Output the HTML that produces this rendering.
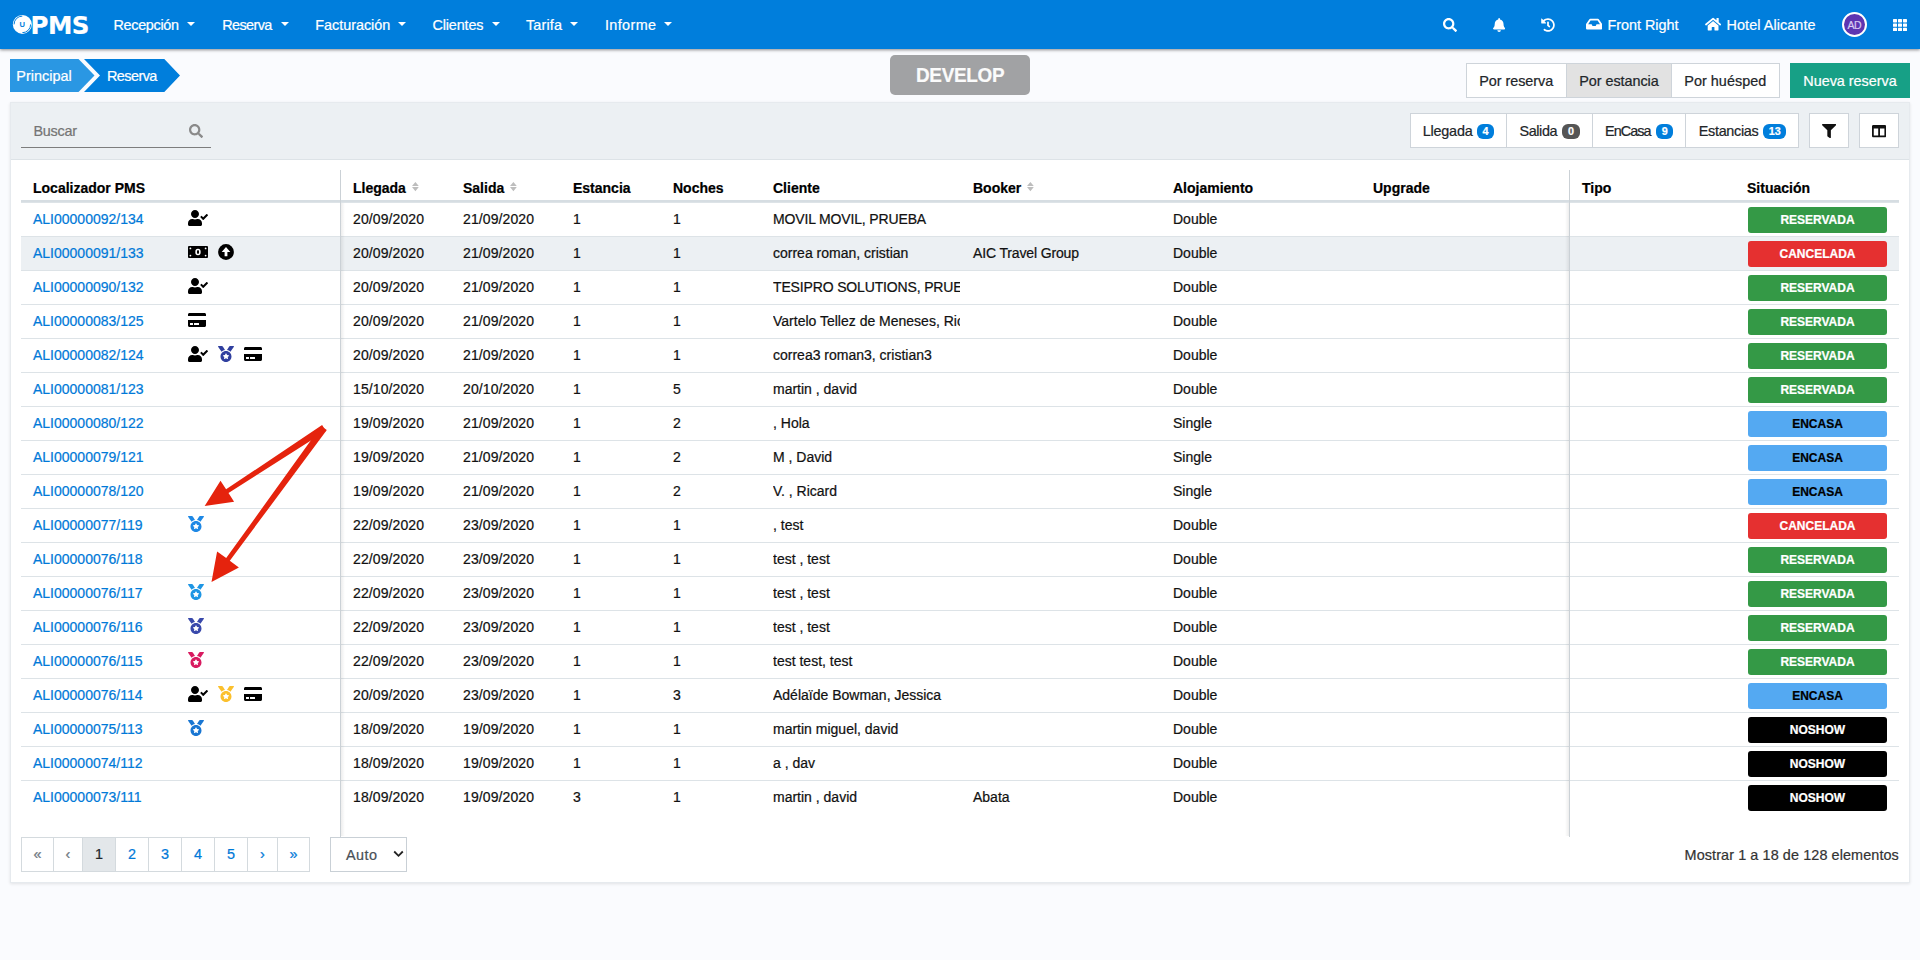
<!DOCTYPE html><html lang="es"><head><meta charset="utf-8"><title>PMS - Reserva</title><style>
*{box-sizing:border-box}
html,body{margin:0;padding:0}
body{width:1920px;height:960px;overflow:hidden;background:#fafbfe;font-family:"Liberation Sans",sans-serif;position:relative}
.t{position:absolute;white-space:nowrap;display:block}
.abs{position:absolute}
svg.ic{display:block}
body{-webkit-text-stroke:0.22px}
#nav{position:absolute;left:0;top:0;width:1920px;height:49px;background:#007edc;box-shadow:0 1px 3px rgba(0,0,0,.45)}
.caret{position:absolute;top:22px;width:0;height:0;border-left:4px solid transparent;border-right:4px solid transparent;border-top:4.3px solid #fff}
#panel{position:absolute;left:10px;top:102px;width:1900px;height:781px;background:#fff;border:1px solid #e6eaee;box-shadow:0 1px 3px rgba(0,0,0,.10)}
#toolbar{position:absolute;left:0;top:0;width:1898px;height:57px;background:#ecf0f3;border-bottom:1px solid #dde3e7}
.btn{position:absolute;background:#fff;border:1px solid #ced4da}
table{position:absolute;left:21px;top:170px;width:1878px;border-collapse:separate;border-spacing:0;table-layout:fixed;font-size:14px;color:#111}
th{height:32px;padding:6px 12px 0 12px;text-align:left;font-weight:700;border-bottom:2px solid #d6dde2;line-height:16px;vertical-align:top;white-space:nowrap;color:#000;padding-top:10px}
td{height:34px;padding:0 0 1px 12px;border-top:1px solid #dde3e7;line-height:16px;vertical-align:middle;white-space:nowrap;overflow:hidden}
tr.h td{background:#ecf0f3}
td a{color:#0079d8;text-decoration:none}
td.loc{position:relative}
td.loc .icons{position:absolute;left:167px;top:0;height:33px;display:flex;align-items:center}
td.loc .icons svg{margin-right:10px;position:relative;top:-1.5px}
.st{display:block;margin-left:1px;width:139px;height:26px;border-radius:3px;font-size:12px;font-weight:700;line-height:26px;text-align:center;color:#fff;margin-top:1px}
.st.res{background:#349946}.st.can{background:#e53030}.st.enc{background:#54a9f2;color:#000}.st.nos{background:#000}
.d{letter-spacing:.1px}
.cl{width:187px;overflow:hidden;white-space:nowrap}
td.tp,th.tp{padding-left:13px}
.sort{display:inline-block;vertical-align:top;margin-left:6px;margin-top:0px}
.pg{position:absolute;top:837px;height:35px;border:1px solid #d4dade;background:#fff;font-size:14.4px;line-height:33.5px;text-align:center}
.badge{position:absolute;height:14.5px;border-radius:6px;color:#fff;font-size:10.8px;font-weight:700;line-height:14.5px;text-align:center}
</style></head><body>
<div id="nav">
<svg class="abs" style="left:10px;top:12px" width="25" height="25" viewBox="10 12 25 25"><circle cx="22.350" cy="24.400" r="9.500" fill="#fff"/><path d="M14.050 24.400A8.300 8.300 0 0 1 22.350 16.100M30.650 24.400A8.300 8.300 0 0 1 22.350 32.700" fill="none" stroke="#007edc" stroke-width="1"/><text x="22.300" y="27.100" font-size="7.600" font-weight="700" text-anchor="middle" fill="#007edc" font-family="Liberation Sans, sans-serif">U</text></svg>
<span id="pms" class="t" style="left:30.5px;top:6.8px;font-size:24.5px;line-height:38px;font-weight:700;color:#fff;letter-spacing:-.5px;font-family:'DejaVu Sans','Liberation Sans',sans-serif">PMS</span>
<span id="t1" class="t" style="left:113.5px;top:14.01px;font-size:14.4px;line-height:22px;color:#fff;font-weight:400;letter-spacing:-0.312px;">Recepción</span>
<i class="caret" style="left:186.8px"></i>
<span id="t2" class="t" style="left:222.25px;top:14.01px;font-size:14.4px;line-height:22px;color:#fff;font-weight:400;letter-spacing:-0.599px;">Reserva</span>
<i class="caret" style="left:281px"></i>
<span id="t3" class="t" style="left:315.25px;top:14.01px;font-size:14.4px;line-height:22px;color:#fff;font-weight:400;letter-spacing:-0.019px;">Facturación</span>
<i class="caret" style="left:398px"></i>
<span id="t4" class="t" style="left:432.5px;top:14.01px;font-size:14.4px;line-height:22px;color:#fff;font-weight:400;letter-spacing:-0.143px;">Clientes</span>
<i class="caret" style="left:492px"></i>
<span id="t5" class="t" style="left:526px;top:14.01px;font-size:14.4px;line-height:22px;color:#fff;font-weight:400;letter-spacing:0.159px;">Tarifa</span>
<i class="caret" style="left:570.3px"></i>
<span id="t6" class="t" style="left:605px;top:14.01px;font-size:14.4px;line-height:22px;color:#fff;font-weight:400;letter-spacing:0.367px;">Informe</span>
<i class="caret" style="left:664px"></i>
<svg class="ic" viewBox="0 0 512 512" width="14.0" height="14" style="position:absolute;left:1442.5px;top:18px"><path fill="#fff" d="M505 442.700L405.300 343c-4.500-4.500-10.600-7-17-7H372c27.600-35.300 44-79.700 44-128C416 93.100 322.900 0 208 0S0 93.100 0 208s93.100 208 208 208c48.300 0 92.700-16.400 128-44v16.300c0 6.400 2.500 12.500 7 17l99.700 99.700c9.400 9.400 24.600 9.400 33.900 0l28.300-28.300c9.400-9.400 9.400-24.600.1-34zM208 336c-70.700 0-128-57.200-128-128 0-70.700 57.200-128 128-128 70.700 0 128 57.200 128 128 0 70.700-57.200 128-128 128z"/></svg>
<svg class="ic" viewBox="0 0 448 512" width="12.25" height="14" style="position:absolute;left:1492.8px;top:18px"><path fill="#fff" d="M224 512c35.320 0 63.970-28.650 63.970-64H160.030c0 35.350 28.650 64 63.970 64zm215.390-149.710c-19.320-20.760-55.470-51.990-55.470-154.290 0-77.700-54.480-139.900-127.940-155.160V32c0-17.670-14.320-32-31.980-32s-31.980 14.330-31.980 32v20.840C118.560 68.100 64.080 130.300 64.080 208c0 102.300-36.150 133.530-55.470 154.290-6 6.450-8.660 14.160-8.610 21.710.11 16.400 12.980 32 32.100 32h383.800c19.120 0 32-15.600 32.100-32 .05-7.550-2.610-15.270-8.610-21.710z"/></svg>
<svg class="ic" viewBox="0 0 512 512" width="14.0" height="14" style="position:absolute;left:1541px;top:17.8px"><path fill="#fff" d="M504 255.531c.253 136.640-111.180 248.372-247.820 248.468-59.015.042-113.223-20.530-155.822-54.911-11.077-8.940-11.905-25.541-1.839-35.607l11.267-11.267c8.609-8.609 22.353-9.551 31.891-1.984C173.062 425.135 212.781 440 256 440c101.705 0 184-82.311 184-184 0-101.705-82.311-184-184-184-48.814 0-93.149 18.969-126.068 49.932l50.754 50.754c10.080 10.080 2.941 27.314-11.313 27.314H24c-8.837 0-16-7.163-16-16V38.627c0-14.254 17.234-21.393 27.314-11.314l49.372 49.372C129.209 34.136 189.552 8 256 8c136.810 0 247.747 110.780 248 247.531zm-180.912 78.784l9.823-12.630c8.138-10.463 6.253-25.542-4.210-33.679L288 256.349V152c0-13.255-10.745-24-24-24h-16c-13.255 0-24 10.745-24 24v135.651l65.409 50.874c10.463 8.137 25.541 6.253 33.679-4.210z"/></svg>
<svg class="ic" viewBox="0 0 576 512" width="16.2" height="14.4" style="position:absolute;left:1585.6px;top:17px"><path fill="#fff" d="M567.938 243.908L462.250 85.374A48.003 48.003 0 0 0 422.311 64H153.689a48 48 0 0 0-39.938 21.374L8.062 243.908A47.994 47.994 0 0 0 0 270.533V400c0 26.510 21.490 48 48 48h480c26.510 0 48-21.490 48-48V270.533a47.994 47.994 0 0 0-8.062-26.625zM162.252 128h251.497l85.333 128H376l-32 64H232l-32-64H76.918l85.334-128z"/></svg>
<span id="t7" class="t" style="left:1607.5px;top:14.01px;font-size:14.4px;line-height:22px;color:#fff;font-weight:400;letter-spacing:-0.019px;">Front Right</span>
<svg class="ic" viewBox="0 0 576 512" width="16.2" height="14.4" style="position:absolute;left:1704.5px;top:16.5px"><path fill="#fff" d="M280.370 148.260L96 300.110V464a16 16 0 0 0 16 16l112.060-.29a16 16 0 0 0 15.920-16V368a16 16 0 0 1 16-16h64a16 16 0 0 1 16 16v95.640a16 16 0 0 0 16 16.050L464 480a16 16 0 0 0 16-16V300L295.670 148.260a12.190 12.190 0 0 0-15.300 0zM571.600 251.470L488 182.560V44.050a12 12 0 0 0-12-12h-56a12 12 0 0 0-12 12v72.610L318.470 43a48 48 0 0 0-61 0L4.340 251.470a12 12 0 0 0-1.600 16.900l25.500 31A12 12 0 0 0 45.150 301l235.220-193.740a12.190 12.190 0 0 1 15.300 0L530.900 301a12 12 0 0 0 16.900-1.600l25.500-31a12 12 0 0 0-1.700-16.930z"/></svg>
<span id="t8" class="t" style="left:1726.5px;top:14.01px;font-size:14.4px;line-height:22px;color:#fff;font-weight:400;letter-spacing:0.077px;">Hotel Alicante</span>
<div class="abs" style="left:1842px;top:12px;width:25px;height:25px;border-radius:50%;background:#5e35b1;border:2px solid #fff"></div>
<span id="t9" class="t" style="left:1847.5px;top:16.76px;font-size:10.5px;line-height:16px;color:#d9ccf2;font-weight:400;letter-spacing:-0.594px;">AD</span>
<svg class="abs" style="left:1893px;top:18.6px" width="14" height="12.2" viewBox="0 0 14 12.2"><rect x="0" y="0.0" width="4" height="3.4" rx=".6" fill="#fff"/><rect x="5" y="0.0" width="4" height="3.4" rx=".6" fill="#fff"/><rect x="10" y="0.0" width="4" height="3.4" rx=".6" fill="#fff"/><rect x="0" y="4.4" width="4" height="3.4" rx=".6" fill="#fff"/><rect x="5" y="4.4" width="4" height="3.4" rx=".6" fill="#fff"/><rect x="10" y="4.4" width="4" height="3.4" rx=".6" fill="#fff"/><rect x="0" y="8.8" width="4" height="3.4" rx=".6" fill="#fff"/><rect x="5" y="8.8" width="4" height="3.4" rx=".6" fill="#fff"/><rect x="10" y="8.8" width="4" height="3.4" rx=".6" fill="#fff"/></svg>
</div>
<svg class="abs" style="left:10px;top:59px" width="172" height="33" viewBox="0 0 172 33"><path d="M0 0H68.500L84.500 16.500L68.500 33H0z" fill="#2a97e3"/><path d="M74 0H154.300L170 16.500L154.300 33H74L90 16.500z" fill="#007edc"/></svg>
<span id="t10" class="t" style="left:16.25px;top:65.01px;font-size:14.4px;line-height:22px;color:#fff;font-weight:400;letter-spacing:0.037px;">Principal</span>
<span id="t11" class="t" style="left:107px;top:65.01px;font-size:14.4px;line-height:22px;color:#fff;font-weight:400;letter-spacing:-0.549px;">Reserva</span>
<div class="abs" style="left:890px;top:55px;width:140px;height:40px;border-radius:5px;background:#a1a2a4"></div>
<span id="t12" class="t" style="left:915.8px;top:58.72px;font-size:21px;line-height:32px;color:#fbfbfb;font-weight:700;letter-spacing:-0.319px;transform-origin:0 50%;transform:scaleX(0.9);">DEVELOP</span>
<div class="btn" style="left:1466px;top:63px;width:101px;height:35px"></div>
<div class="btn" style="left:1566px;top:63px;width:106px;height:35px;background:#e2e2e2"></div>
<div class="btn" style="left:1671px;top:63px;width:109px;height:35px"></div>
<div class="abs" style="left:1790px;top:63px;width:120px;height:35px;background:#17a086"></div>
<span id="t13" class="t" style="left:1479.25px;top:70.26px;font-size:14.4px;line-height:22px;color:#212529;font-weight:400;letter-spacing:-0.039px;">Por reserva</span>
<span id="t14" class="t" style="left:1579.25px;top:70.26px;font-size:14.4px;line-height:22px;color:#212529;font-weight:400;letter-spacing:-0.045px;">Por estancia</span>
<span id="t15" class="t" style="left:1684.25px;top:70.26px;font-size:14.4px;line-height:22px;color:#212529;font-weight:400;letter-spacing:0.039px;">Por huésped</span>
<span id="t16" class="t" style="left:1803.25px;top:70.26px;font-size:14.4px;line-height:22px;color:#fff;font-weight:400;letter-spacing:-0.008px;">Nueva reserva</span>
<div id="panel"><div id="toolbar"></div></div>
<div class="abs" style="left:21px;top:147px;width:190px;height:1px;background:#7d7d7d"></div>
<span id="t17" class="t" style="left:33.4px;top:119.91px;font-size:14.4px;line-height:22px;color:#757575;font-weight:400;letter-spacing:-0.239px;">Buscar</span>
<svg class="ic" viewBox="0 0 512 512" width="14.0" height="14" style="position:absolute;left:189px;top:124px"><path fill="#8a8a8a" d="M505 442.700L405.300 343c-4.500-4.500-10.600-7-17-7H372c27.600-35.300 44-79.700 44-128C416 93.100 322.900 0 208 0S0 93.100 0 208s93.100 208 208 208c48.300 0 92.700-16.400 128-44v16.300c0 6.400 2.500 12.500 7 17l99.700 99.700c9.400 9.400 24.600 9.400 33.900 0l28.300-28.300c9.400-9.400 9.400-24.600.1-34zM208 336c-70.700 0-128-57.200-128-128 0-70.700 57.200-128 128-128 70.700 0 128 57.200 128 128 0 70.700-57.200 128-128 128z"/></svg>
<div class="btn" style="left:1410px;top:113px;width:97px;height:35px"></div>
<div class="btn" style="left:1506px;top:113px;width:87px;height:35px"></div>
<div class="btn" style="left:1592px;top:113px;width:94px;height:35px"></div>
<div class="btn" style="left:1685px;top:113px;width:114px;height:35px"></div>
<span id="t18" class="t" style="left:1422.7px;top:120.26px;font-size:14.4px;line-height:22px;color:#212529;font-weight:400;letter-spacing:-0.203px;">Llegada</span>
<span id="t19" class="t" style="left:1519.5px;top:120.26px;font-size:14.4px;line-height:22px;color:#212529;font-weight:400;letter-spacing:-0.403px;">Salida</span>
<span id="t20" class="t" style="left:1605px;top:120.26px;font-size:14.4px;line-height:22px;color:#212529;font-weight:400;letter-spacing:-0.941px;">EnCasa</span>
<span id="t21" class="t" style="left:1698.75px;top:120.26px;font-size:14.4px;line-height:22px;color:#212529;font-weight:400;letter-spacing:-0.299px;">Estancias</span>
<span class="badge" style="left:1477px;top:124.4px;width:17.2px;background:#007edc">4</span>
<span class="badge" style="left:1562px;top:124.4px;width:18px;background:#555">0</span>
<span class="badge" style="left:1656.2px;top:124.4px;width:17px;background:#007edc">9</span>
<span class="badge" style="left:1763px;top:124.4px;width:23.3px;background:#007edc">13</span>
<div class="btn" style="left:1809px;top:113px;width:40px;height:35px"></div>
<div class="btn" style="left:1859px;top:113px;width:40px;height:35px"></div>
<svg class="ic" viewBox="0 0 512 512" width="14.2" height="14.2" style="position:absolute;left:1821.5px;top:123.8px"><path fill="#111" d="M487.976 0H24.028C2.710 0-8.047 25.866 7.058 40.971L192 225.941V432c0 7.831 3.821 15.170 10.237 19.662l80 55.980C298.020 518.690 320 507.493 320 487.980V225.941l184.947-184.970C520.021 25.896 509.338 0 487.976 0z"/></svg>
<svg class="ic" viewBox="0 0 512 512" width="14.2" height="14.2" style="position:absolute;left:1872px;top:124px"><path fill="#111" d="M464 32H48C21.490 32 0 53.490 0 80v352c0 26.510 21.490 48 48 48h416c26.510 0 48-21.490 48-48V80c0-26.510-21.490-48-48-48zM224 416H64V160h160v256zm224 0H288V160h160v256z"/></svg>
<table><colgroup><col style="width:320px"><col style="width:110px"><col style="width:110px"><col style="width:100px"><col style="width:100px"><col style="width:200px"><col style="width:200px"><col style="width:200px"><col style="width:208px"><col style="width:166px"><col style="width:164px"></colgroup>
<thead><tr><th>Localizador PMS</th><th>Llegada<svg class="sort" width="7" height="16" viewBox="0 0 7 16"><path d="M3.400 2L6.800 6.100H0zM3.400 11.200L0 7.100H6.800z" fill="#bdbdbd"/></svg></th><th>Salida<svg class="sort" width="7" height="16" viewBox="0 0 7 16"><path d="M3.400 2L6.800 6.100H0zM3.400 11.200L0 7.100H6.800z" fill="#bdbdbd"/></svg></th><th>Estancia</th><th>Noches</th><th>Cliente</th><th>Booker<svg class="sort" width="7" height="16" viewBox="0 0 7 16"><path d="M3.400 2L6.800 6.100H0zM3.400 11.200L0 7.100H6.800z" fill="#bdbdbd"/></svg></th><th>Alojamiento</th><th>Upgrade</th><th class=tp>Tipo</th><th>Situación</th></tr></thead><tbody>
<tr><td class="loc"><a>ALI00000092/134</a><span class="icons"><svg class="ic" viewBox="0 0 640 512" width="20.0" height="16" style=""><path fill="#000" d="M224 256c70.700 0 128-57.300 128-128S294.700 0 224 0 96 57.300 96 128s57.300 128 128 128zm89.600 32h-16.700c-22.200 10.200-46.900 16-72.900 16s-50.600-5.800-72.900-16h-16.700C60.200 288 0 348.200 0 422.400V464c0 26.500 21.500 48 48 48h352c26.500 0 48-21.500 48-48v-41.600c0-74.200-60.200-134.400-134.400-134.400zm323-128.400l-27.800-28.100c-4.600-4.700-12.100-4.700-16.800-.1l-104.800 104-45.500-45.800c-4.600-4.700-12.100-4.700-16.800-.1l-28.100 27.900c-4.700 4.600-4.700 12.100-.1 16.800l81.700 82.300c4.600 4.700 12.100 4.700 16.800.1l141.300-140.200c4.600-4.700 4.700-12.200.1-16.800z"/></svg></span></td><td class="d">20/09/2020</td><td class="d">21/09/2020</td><td>1</td><td>1</td><td><div class="cl"><span style="letter-spacing:-.15px">MOVIL MOVIL, PRUEBA</span></div></td><td></td><td>Double</td><td></td><td></td><td><span class="st res">RESERVADA</span></td></tr>
<tr class="h"><td class="loc"><a>ALI00000091/133</a><span class="icons"><svg class="ic" width="20" height="16" viewBox="0 0 20 16"><rect x="0" y="2" width="20" height="12" rx="1" fill="#000"/><ellipse cx="10" cy="8" rx="2.700" ry="3.300" fill="#fff"/><ellipse cx="10" cy="8" rx="1.100" ry="2" fill="#000"/><circle cx="2.400" cy="4.400" r=".9" fill="#fff"/><circle cx="17.600" cy="4.400" r=".9" fill="#fff"/><circle cx="2.400" cy="11.600" r=".9" fill="#fff"/><circle cx="17.600" cy="11.600" r=".9" fill="#fff"/></svg><svg class="ic" width="16" height="16" viewBox="0 0 16 16"><circle cx="8" cy="8" r="7.900" fill="#000"/><path d="M8 3L12.300 7.900H9.400V12.300H6.600V7.900H3.700z" fill="#fff"/></svg></span></td><td class="d">20/09/2020</td><td class="d">21/09/2020</td><td>1</td><td>1</td><td><div class="cl">correa roman, cristian</div></td><td><span style="letter-spacing:-.14px">AIC Travel Group</span></td><td>Double</td><td></td><td></td><td><span class="st can">CANCELADA</span></td></tr>
<tr><td class="loc"><a>ALI00000090/132</a><span class="icons"><svg class="ic" viewBox="0 0 640 512" width="20.0" height="16" style=""><path fill="#000" d="M224 256c70.700 0 128-57.300 128-128S294.700 0 224 0 96 57.300 96 128s57.300 128 128 128zm89.600 32h-16.700c-22.200 10.200-46.900 16-72.900 16s-50.600-5.800-72.900-16h-16.700C60.200 288 0 348.200 0 422.400V464c0 26.500 21.500 48 48 48h352c26.500 0 48-21.500 48-48v-41.600c0-74.200-60.200-134.400-134.400-134.400zm323-128.400l-27.800-28.100c-4.600-4.700-12.100-4.700-16.800-.1l-104.800 104-45.500-45.800c-4.600-4.700-12.100-4.700-16.800-.1l-28.100 27.900c-4.700 4.600-4.700 12.100-.1 16.800l81.700 82.300c4.600 4.700 12.100 4.700 16.800.1l141.300-140.200c4.600-4.700 4.700-12.200.1-16.800z"/></svg></span></td><td class="d">20/09/2020</td><td class="d">21/09/2020</td><td>1</td><td>1</td><td><div class="cl"><span style="letter-spacing:-.15px">TESIPRO SOLUTIONS, PRUEBA</span></div></td><td></td><td>Double</td><td></td><td></td><td><span class="st res">RESERVADA</span></td></tr>
<tr><td class="loc"><a>ALI00000083/125</a><span class="icons"><svg class="ic" viewBox="0 0 576 512" width="18.0" height="16" style=""><path fill="#000" d="M0 432c0 26.500 21.500 48 48 48h480c26.500 0 48-21.500 48-48V256H0v176zm192-68c0-6.600 5.400-12 12-12h136c6.600 0 12 5.400 12 12v40c0 6.600-5.400 12-12 12H204c-6.600 0-12-5.400-12-12v-40zm-128 0c0-6.600 5.400-12 12-12h72c6.600 0 12 5.400 12 12v40c0 6.600-5.400 12-12 12H76c-6.600 0-12-5.400-12-12v-40zM576 80v48H0V80c0-26.500 21.500-48 48-48h480c26.500 0 48 21.500 48 48z"/></svg></span></td><td class="d">20/09/2020</td><td class="d">21/09/2020</td><td>1</td><td>1</td><td><div class="cl">Vartelo Tellez de Meneses, Ricardo</div></td><td></td><td>Double</td><td></td><td></td><td><span class="st res">RESERVADA</span></td></tr>
<tr><td class="loc"><a>ALI00000082/124</a><span class="icons"><svg class="ic" viewBox="0 0 640 512" width="20.0" height="16" style=""><path fill="#000" d="M224 256c70.700 0 128-57.300 128-128S294.700 0 224 0 96 57.300 96 128s57.300 128 128 128zm89.600 32h-16.700c-22.200 10.200-46.900 16-72.900 16s-50.600-5.800-72.900-16h-16.700C60.200 288 0 348.200 0 422.400V464c0 26.500 21.500 48 48 48h352c26.500 0 48-21.500 48-48v-41.600c0-74.200-60.200-134.400-134.400-134.400zm323-128.400l-27.800-28.100c-4.600-4.700-12.100-4.700-16.800-.1l-104.800 104-45.500-45.800c-4.600-4.700-12.100-4.700-16.800-.1l-28.100 27.900c-4.700 4.600-4.700 12.100-.1 16.800l81.700 82.300c4.600 4.700 12.100 4.700 16.800.1l141.300-140.200c4.600-4.700 4.700-12.200.1-16.800z"/></svg><svg class="ic" viewBox="0 0 512 512" width="16.0" height="16" style=""><path fill="#303f9f" d="M223.750 130.750L154.620 15.540A31.997 31.997 0 0 0 127.180 0H16.030C3.080 0-4.500 14.570 2.920 25.180l111.270 158.960c29.720-27.770 67.520-46.830 109.560-53.390zM495.970 0H384.820c-11.240 0-21.660 5.900-27.440 15.540l-69.130 115.210c42.040 6.560 79.840 25.620 109.560 53.380L509.080 25.180C516.500 14.570 508.920 0 495.970 0zM256 160c-97.200 0-176 78.800-176 176s78.800 176 176 176 176-78.800 176-176-78.800-176-176-176zm92.520 157.260l-37.930 36.960 8.970 52.220c1.600 9.360-8.260 16.510-16.650 12.090L256 393.880l-46.900 24.650c-8.400 4.450-18.250-2.740-16.650-12.090l8.970-52.220-37.930-36.960c-6.820-6.640-3.050-18.230 6.350-19.590l52.430-7.640 23.430-47.520c2.110-4.280 6.190-6.390 10.280-6.390 4.110 0 8.220 2.140 10.330 6.390l23.430 47.520 52.430 7.640c9.400 1.360 13.170 12.950 6.350 19.590z"/></svg><svg class="ic" viewBox="0 0 576 512" width="18.0" height="16" style=""><path fill="#000" d="M0 432c0 26.500 21.500 48 48 48h480c26.500 0 48-21.500 48-48V256H0v176zm192-68c0-6.600 5.400-12 12-12h136c6.600 0 12 5.400 12 12v40c0 6.600-5.400 12-12 12H204c-6.600 0-12-5.400-12-12v-40zm-128 0c0-6.600 5.400-12 12-12h72c6.600 0 12 5.400 12 12v40c0 6.600-5.400 12-12 12H76c-6.600 0-12-5.400-12-12v-40zM576 80v48H0V80c0-26.500 21.500-48 48-48h480c26.500 0 48 21.500 48 48z"/></svg></span></td><td class="d">20/09/2020</td><td class="d">21/09/2020</td><td>1</td><td>1</td><td><div class="cl">correa3 roman3, cristian3</div></td><td></td><td>Double</td><td></td><td></td><td><span class="st res">RESERVADA</span></td></tr>
<tr><td class="loc"><a>ALI00000081/123</a><span class="icons"></span></td><td class="d">15/10/2020</td><td class="d">20/10/2020</td><td>1</td><td>5</td><td><div class="cl">martin , david</div></td><td></td><td>Double</td><td></td><td></td><td><span class="st res">RESERVADA</span></td></tr>
<tr><td class="loc"><a>ALI00000080/122</a><span class="icons"></span></td><td class="d">19/09/2020</td><td class="d">21/09/2020</td><td>1</td><td>2</td><td><div class="cl">, Hola</div></td><td></td><td>Single</td><td></td><td></td><td><span class="st enc">ENCASA</span></td></tr>
<tr><td class="loc"><a>ALI00000079/121</a><span class="icons"></span></td><td class="d">19/09/2020</td><td class="d">21/09/2020</td><td>1</td><td>2</td><td><div class="cl">M , David</div></td><td></td><td>Single</td><td></td><td></td><td><span class="st enc">ENCASA</span></td></tr>
<tr><td class="loc"><a>ALI00000078/120</a><span class="icons"></span></td><td class="d">19/09/2020</td><td class="d">21/09/2020</td><td>1</td><td>2</td><td><div class="cl">V. , Ricard</div></td><td></td><td>Single</td><td></td><td></td><td><span class="st enc">ENCASA</span></td></tr>
<tr><td class="loc"><a>ALI00000077/119</a><span class="icons"><svg class="ic" viewBox="0 0 512 512" width="16.0" height="16" style=""><path fill="#1e88e5" d="M223.750 130.750L154.620 15.540A31.997 31.997 0 0 0 127.180 0H16.030C3.080 0-4.500 14.570 2.920 25.180l111.270 158.960c29.720-27.770 67.520-46.830 109.560-53.390zM495.970 0H384.820c-11.240 0-21.660 5.900-27.440 15.540l-69.130 115.210c42.040 6.560 79.840 25.620 109.560 53.380L509.080 25.180C516.500 14.570 508.920 0 495.970 0zM256 160c-97.200 0-176 78.800-176 176s78.800 176 176 176 176-78.800 176-176-78.800-176-176-176zm92.520 157.260l-37.930 36.960 8.970 52.220c1.600 9.360-8.260 16.510-16.650 12.090L256 393.880l-46.900 24.650c-8.400 4.450-18.250-2.740-16.650-12.090l8.970-52.220-37.930-36.960c-6.820-6.640-3.050-18.230 6.350-19.590l52.430-7.640 23.430-47.520c2.110-4.280 6.190-6.390 10.280-6.390 4.110 0 8.220 2.140 10.330 6.390l23.430 47.520 52.430 7.640c9.400 1.360 13.170 12.950 6.350 19.590z"/></svg></span></td><td class="d">22/09/2020</td><td class="d">23/09/2020</td><td>1</td><td>1</td><td><div class="cl">, test</div></td><td></td><td>Double</td><td></td><td></td><td><span class="st can">CANCELADA</span></td></tr>
<tr><td class="loc"><a>ALI00000076/118</a><span class="icons"></span></td><td class="d">22/09/2020</td><td class="d">23/09/2020</td><td>1</td><td>1</td><td><div class="cl">test , test</div></td><td></td><td>Double</td><td></td><td></td><td><span class="st res">RESERVADA</span></td></tr>
<tr><td class="loc"><a>ALI00000076/117</a><span class="icons"><svg class="ic" viewBox="0 0 512 512" width="16.0" height="16" style=""><path fill="#1e96e4" d="M223.750 130.750L154.620 15.540A31.997 31.997 0 0 0 127.180 0H16.030C3.080 0-4.500 14.570 2.920 25.180l111.270 158.960c29.720-27.770 67.520-46.830 109.560-53.390zM495.970 0H384.820c-11.240 0-21.660 5.900-27.440 15.540l-69.130 115.210c42.040 6.560 79.840 25.620 109.560 53.380L509.080 25.180C516.500 14.570 508.920 0 495.970 0zM256 160c-97.200 0-176 78.800-176 176s78.800 176 176 176 176-78.800 176-176-78.800-176-176-176zm92.520 157.260l-37.930 36.960 8.970 52.220c1.600 9.360-8.260 16.510-16.650 12.090L256 393.880l-46.900 24.650c-8.400 4.450-18.250-2.740-16.650-12.090l8.970-52.220-37.930-36.960c-6.820-6.640-3.050-18.230 6.350-19.590l52.430-7.640 23.430-47.520c2.110-4.280 6.190-6.390 10.280-6.390 4.110 0 8.220 2.140 10.330 6.390l23.430 47.520 52.430 7.640c9.400 1.360 13.170 12.950 6.350 19.590z"/></svg></span></td><td class="d">22/09/2020</td><td class="d">23/09/2020</td><td>1</td><td>1</td><td><div class="cl">test , test</div></td><td></td><td>Double</td><td></td><td></td><td><span class="st res">RESERVADA</span></td></tr>
<tr><td class="loc"><a>ALI00000076/116</a><span class="icons"><svg class="ic" viewBox="0 0 512 512" width="16.0" height="16" style=""><path fill="#3949ab" d="M223.750 130.750L154.620 15.540A31.997 31.997 0 0 0 127.180 0H16.030C3.080 0-4.500 14.570 2.920 25.180l111.270 158.960c29.720-27.770 67.520-46.830 109.560-53.390zM495.970 0H384.820c-11.240 0-21.660 5.900-27.440 15.540l-69.130 115.210c42.040 6.560 79.840 25.620 109.560 53.380L509.080 25.180C516.500 14.570 508.920 0 495.970 0zM256 160c-97.200 0-176 78.800-176 176s78.800 176 176 176 176-78.800 176-176-78.800-176-176-176zm92.520 157.260l-37.930 36.960 8.970 52.220c1.600 9.360-8.260 16.510-16.650 12.090L256 393.880l-46.900 24.650c-8.400 4.450-18.250-2.740-16.650-12.090l8.970-52.220-37.930-36.960c-6.820-6.640-3.050-18.230 6.350-19.590l52.430-7.640 23.430-47.520c2.110-4.280 6.190-6.390 10.280-6.390 4.110 0 8.220 2.140 10.330 6.390l23.430 47.520 52.430 7.640c9.400 1.360 13.170 12.950 6.350 19.590z"/></svg></span></td><td class="d">22/09/2020</td><td class="d">23/09/2020</td><td>1</td><td>1</td><td><div class="cl">test , test</div></td><td></td><td>Double</td><td></td><td></td><td><span class="st res">RESERVADA</span></td></tr>
<tr><td class="loc"><a>ALI00000076/115</a><span class="icons"><svg class="ic" viewBox="0 0 512 512" width="16.0" height="16" style=""><path fill="#d81b60" d="M223.750 130.750L154.620 15.540A31.997 31.997 0 0 0 127.180 0H16.030C3.080 0-4.500 14.570 2.920 25.180l111.270 158.960c29.720-27.770 67.520-46.830 109.560-53.390zM495.970 0H384.820c-11.240 0-21.660 5.900-27.440 15.540l-69.130 115.210c42.040 6.560 79.840 25.620 109.560 53.380L509.080 25.180C516.500 14.570 508.920 0 495.970 0zM256 160c-97.200 0-176 78.800-176 176s78.800 176 176 176 176-78.800 176-176-78.800-176-176-176zm92.520 157.260l-37.930 36.960 8.970 52.220c1.600 9.360-8.260 16.510-16.650 12.090L256 393.880l-46.900 24.650c-8.400 4.450-18.250-2.740-16.650-12.090l8.970-52.220-37.930-36.960c-6.820-6.640-3.050-18.230 6.350-19.590l52.430-7.640 23.430-47.520c2.110-4.280 6.190-6.390 10.280-6.390 4.110 0 8.220 2.140 10.330 6.390l23.430 47.520 52.430 7.640c9.400 1.360 13.170 12.950 6.350 19.590z"/></svg></span></td><td class="d">22/09/2020</td><td class="d">23/09/2020</td><td>1</td><td>1</td><td><div class="cl">test test, test</div></td><td></td><td>Double</td><td></td><td></td><td><span class="st res">RESERVADA</span></td></tr>
<tr><td class="loc"><a>ALI00000076/114</a><span class="icons"><svg class="ic" viewBox="0 0 640 512" width="20.0" height="16" style=""><path fill="#000" d="M224 256c70.700 0 128-57.300 128-128S294.700 0 224 0 96 57.300 96 128s57.300 128 128 128zm89.600 32h-16.700c-22.200 10.200-46.900 16-72.900 16s-50.600-5.800-72.900-16h-16.700C60.200 288 0 348.200 0 422.400V464c0 26.500 21.500 48 48 48h352c26.500 0 48-21.500 48-48v-41.600c0-74.200-60.200-134.400-134.400-134.400zm323-128.400l-27.800-28.100c-4.600-4.700-12.100-4.700-16.800-.1l-104.800 104-45.500-45.800c-4.600-4.700-12.100-4.700-16.800-.1l-28.100 27.900c-4.700 4.600-4.700 12.100-.1 16.800l81.700 82.300c4.600 4.700 12.100 4.700 16.800.1l141.300-140.200c4.600-4.700 4.700-12.200.1-16.800z"/></svg><svg class="ic" viewBox="0 0 512 512" width="16.0" height="16" style=""><path fill="#fbc02d" d="M223.750 130.750L154.620 15.540A31.997 31.997 0 0 0 127.180 0H16.030C3.080 0-4.500 14.570 2.920 25.180l111.270 158.960c29.720-27.770 67.520-46.830 109.560-53.390zM495.970 0H384.820c-11.240 0-21.660 5.900-27.440 15.540l-69.130 115.210c42.040 6.560 79.840 25.620 109.560 53.380L509.080 25.180C516.500 14.570 508.920 0 495.970 0zM256 160c-97.200 0-176 78.800-176 176s78.800 176 176 176 176-78.800 176-176-78.800-176-176-176zm92.520 157.260l-37.930 36.960 8.970 52.220c1.600 9.360-8.260 16.510-16.650 12.090L256 393.880l-46.900 24.650c-8.400 4.450-18.250-2.740-16.650-12.090l8.970-52.220-37.930-36.960c-6.820-6.640-3.050-18.230 6.350-19.590l52.430-7.640 23.430-47.520c2.110-4.280 6.190-6.390 10.280-6.390 4.110 0 8.220 2.140 10.330 6.390l23.430 47.520 52.430 7.640c9.400 1.360 13.170 12.950 6.350 19.590z"/></svg><svg class="ic" viewBox="0 0 576 512" width="18.0" height="16" style=""><path fill="#000" d="M0 432c0 26.500 21.500 48 48 48h480c26.500 0 48-21.500 48-48V256H0v176zm192-68c0-6.600 5.400-12 12-12h136c6.600 0 12 5.400 12 12v40c0 6.600-5.400 12-12 12H204c-6.600 0-12-5.400-12-12v-40zm-128 0c0-6.600 5.400-12 12-12h72c6.600 0 12 5.400 12 12v40c0 6.600-5.400 12-12 12H76c-6.600 0-12-5.400-12-12v-40zM576 80v48H0V80c0-26.500 21.500-48 48-48h480c26.500 0 48 21.500 48 48z"/></svg></span></td><td class="d">20/09/2020</td><td class="d">23/09/2020</td><td>1</td><td>3</td><td><div class="cl">Adélaïde Bowman, Jessica</div></td><td></td><td>Double</td><td></td><td></td><td><span class="st enc">ENCASA</span></td></tr>
<tr><td class="loc"><a>ALI00000075/113</a><span class="icons"><svg class="ic" viewBox="0 0 512 512" width="16.0" height="16" style=""><path fill="#1976d2" d="M223.750 130.750L154.620 15.540A31.997 31.997 0 0 0 127.180 0H16.030C3.080 0-4.500 14.570 2.920 25.180l111.270 158.960c29.720-27.770 67.520-46.830 109.560-53.390zM495.970 0H384.820c-11.240 0-21.660 5.900-27.440 15.540l-69.130 115.210c42.040 6.560 79.840 25.620 109.560 53.380L509.080 25.180C516.500 14.570 508.920 0 495.970 0zM256 160c-97.200 0-176 78.800-176 176s78.800 176 176 176 176-78.800 176-176-78.800-176-176-176zm92.520 157.260l-37.930 36.960 8.970 52.220c1.600 9.360-8.260 16.510-16.650 12.090L256 393.880l-46.900 24.650c-8.400 4.450-18.250-2.740-16.650-12.090l8.970-52.220-37.930-36.960c-6.820-6.640-3.050-18.230 6.350-19.590l52.430-7.640 23.430-47.520c2.110-4.280 6.190-6.390 10.280-6.390 4.110 0 8.220 2.140 10.330 6.390l23.430 47.520 52.430 7.640c9.400 1.360 13.170 12.950 6.350 19.590z"/></svg></span></td><td class="d">18/09/2020</td><td class="d">19/09/2020</td><td>1</td><td>1</td><td><div class="cl">martin miguel, david</div></td><td></td><td>Double</td><td></td><td></td><td><span class="st nos">NOSHOW</span></td></tr>
<tr><td class="loc"><a>ALI00000074/112</a><span class="icons"></span></td><td class="d">18/09/2020</td><td class="d">19/09/2020</td><td>1</td><td>1</td><td><div class="cl">a , dav</div></td><td></td><td>Double</td><td></td><td></td><td><span class="st nos">NOSHOW</span></td></tr>
<tr><td class="loc"><a>ALI00000073/111</a><span class="icons"></span></td><td class="d">18/09/2020</td><td class="d">19/09/2020</td><td>3</td><td>1</td><td><div class="cl">martin , david</div></td><td>Abata</td><td>Double</td><td></td><td></td><td><span class="st nos">NOSHOW</span></td></tr>
</tbody></table>
<div class="abs" style="left:340px;top:170px;width:1px;height:667px;background:#cbd1d6"></div>
<div class="abs" style="left:341px;top:203px;width:4px;height:633px;background:linear-gradient(90deg,rgba(0,0,0,.07),rgba(0,0,0,0))"></div>
<div class="abs" style="left:1569px;top:170px;width:1px;height:667px;background:#cbd1d6"></div>
<div class="abs" style="left:1565px;top:203px;width:4px;height:633px;background:linear-gradient(270deg,rgba(0,0,0,.07),rgba(0,0,0,0))"></div>
<div class="pg" style="left:21px;width:33px;background:#fff;color:#6c757d">«</div>
<div class="pg" style="left:53px;width:30px;background:#fff;color:#6c757d">‹</div>
<div class="pg" style="left:82px;width:34px;background:#e3e7ea;color:#212529">1</div>
<div class="pg" style="left:115px;width:34px;background:#fff;color:#0079d8">2</div>
<div class="pg" style="left:148px;width:34px;background:#fff;color:#0079d8">3</div>
<div class="pg" style="left:181px;width:34px;background:#fff;color:#0079d8">4</div>
<div class="pg" style="left:214px;width:34px;background:#fff;color:#0079d8">5</div>
<div class="pg" style="left:247px;width:31px;background:#fff;color:#0079d8">›</div>
<div class="pg" style="left:277px;width:33px;background:#fff;color:#0079d8">»</div>
<div class="pg" style="left:330px;width:77px;border-color:#c9d0d6"></div>
<span id="t22" class="t" style="left:346px;top:844.01px;font-size:14.4px;line-height:22px;color:#495057;font-weight:400;letter-spacing:0.464px;">Auto</span>
<svg class="abs" style="left:392.500px;top:850px" width="11" height="8" viewBox="0 0 11 8"><path d="M1.200 1.500L5.500 5.800L9.800 1.500" fill="none" stroke="#222" stroke-width="1.800"/></svg>
<span id="t23" class="t" style="left:1684.6px;top:844.31px;font-size:14.4px;line-height:22px;color:#333;font-weight:400;letter-spacing:0.100px;">Mostrar 1 a 18 de 128 elementos</span>
<svg class="abs" style="left:0;top:0;pointer-events:none" width="1920" height="960" viewBox="0 0 1920 960"><polygon points="322.1,425.1 226.1,489.3 220.5,480.8 204.7,506.0 234.1,501.7 228.5,493.1 325.9,430.9" fill="#e5230d"/><polygon points="321.2,425.9 226.2,558.1 217.1,551.4 211.5,582.0 238.9,567.4 229.8,560.7 326.8,430.1" fill="#e5230d"/></svg>
</body></html>
